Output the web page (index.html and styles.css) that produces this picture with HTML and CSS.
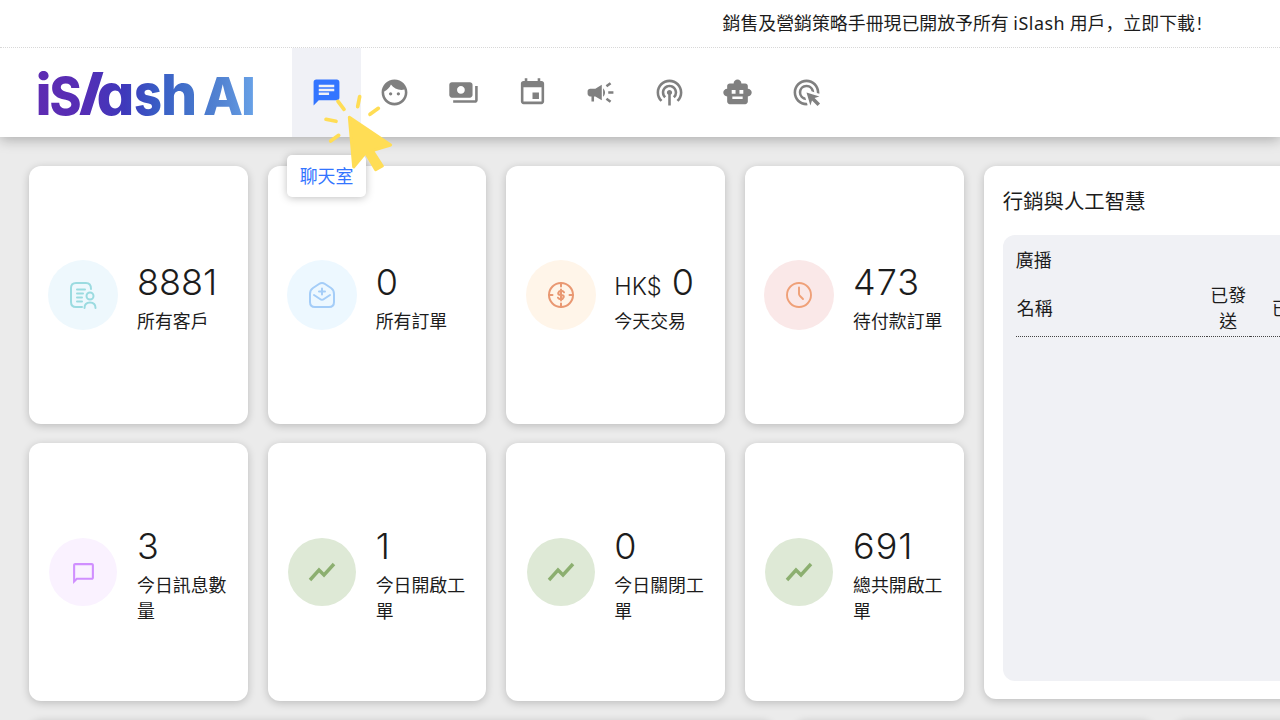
FILE: index.html
```
<!DOCTYPE html>
<html lang="zh-Hant">
<head>
<meta charset="utf-8">
<title>iSlash AI</title>
<link rel="stylesheet" href="styles.css">
</head>
<body>
<div class="banner"><p class="banner-text">銷售及營銷策略手冊現已開放予所有 <span class="latin">iSlash</span> 用戶<span class="punct" lang="zh-Hans">，</span>立即下載<span class="bang">!</span></p></div>
<header class="topbar">
  <svg class="logo" viewBox="0 0 230 60" role="img" aria-label="iSlash AI">
    <defs><linearGradient id="brand" gradientUnits="userSpaceOnUse" x1="8" y1="0" x2="226" y2="0">
      <stop offset="0" stop-color="#5e2cb2"/><stop offset=".2" stop-color="#562db5"/><stop offset=".4" stop-color="#3e39bb"/><stop offset=".55" stop-color="#395dc5"/><stop offset=".7" stop-color="#4473cb"/><stop offset=".85" stop-color="#5485d3"/><stop offset="1" stop-color="#69a3e8"/>
    </linearGradient></defs>
    <g class="logo-text" fill="url(#brand)">
      <text x="5.500" y="52">i</text>
      <text class="logo-cap" x="19.500" y="52" textLength="32" lengthAdjust="spacingAndGlyphs">S</text>
      <text class="logo-slash" x="50.500" y="45.500" textLength="22" lengthAdjust="spacingAndGlyphs">/</text>
      <text x="66.500" y="52" textLength="38" lengthAdjust="spacingAndGlyphs">a</text>
      <text x="104" y="52" textLength="28" lengthAdjust="spacingAndGlyphs">s</text>
      <text x="131" y="52">h</text>
      <text class="logo-cap" x="173" y="52">A</text>
      <text class="logo-cap" x="211" y="52">I</text>
    </g>
  </svg>
  <nav class="nav">
    <a class="nav-item active"><svg viewBox="0 0 24 24"><path d="M20 2H4c-1.1 0-1.99.9-1.99 2L2 22l4-4h14c1.1 0 2-.9 2-2V4c0-1.1-.9-2-2-2zM6 9h12v2H6V9zm8 5H6v-2h8v2zm4-6H6V6h12v2z"/></svg><span class="tooltip">聊天室</span>
      <svg class="cursor" viewBox="100 140 240 250"><g stroke="#ffdd55" stroke-linecap="round" stroke-linejoin="round"><path d="M160 168l18 24M225 154l-6 30M256 207l25-18M124 222l30 6M138 287l24-17" stroke-width="11" fill="none"/><path d="M194 216L318 299L263 316L293 362L273 373L243 322L207 365Z" fill="#ffdd55" stroke-width="9"/></g></svg>
    </a>
    <a class="nav-item"><svg viewBox="0 0 24 24"><path d="M9 11.75c-.69 0-1.25.56-1.25 1.25s.56 1.25 1.25 1.25 1.25-.56 1.25-1.25-.56-1.25-1.25-1.25zm6 0c-.69 0-1.25.56-1.25 1.25s.56 1.25 1.25 1.25 1.25-.56 1.25-1.25-.56-1.25-1.25-1.25zM12 2C6.48 2 2 6.48 2 12s4.48 10 10 10 10-4.48 10-10S17.52 2 12 2zm0 18c-4.41 0-8-3.59-8-8 0-.29.02-.58.05-.86 2.36-1.05 4.23-2.98 5.21-5.37C11.07 8.33 14.05 10 17.42 10c.78 0 1.53-.09 2.25-.26.21.71.33 1.47.33 2.26 0 4.41-3.59 8-8 8z"/></svg></a>
    <a class="nav-item"><svg viewBox="0 0 24 24"><path d="M19 14V6c0-1.1-.9-2-2-2H3c-1.1 0-2 .9-2 2v8c0 1.1.9 2 2 2h14c1.1 0 2-.9 2-2zm-9-1c-1.66 0-3-1.34-3-3s1.34-3 3-3 3 1.34 3 3-1.34 3-3 3zm13-6v11c0 1.1-.9 2-2 2H4v-2h17V7h2z"/></svg></a>
    <a class="nav-item"><svg viewBox="0 0 24 24"><path d="M17 12h-5v5h5v-5zM16 1v2H8V1H6v2H5c-1.11 0-1.99.9-1.99 2L3 19c0 1.1.89 2 2 2h14c1.1 0 2-.9 2-2V5c0-1.1-.9-2-2-2h-1V1h-2zm3 18H5V8h14v11z"/></svg></a>
    <a class="nav-item"><svg viewBox="0 0 24 24"><path d="M18 11v2h4v-2h-4zm-2 6.61c.96.71 2.21 1.65 3.2 2.39.4-.53.8-1.07 1.2-1.6-.99-.74-2.24-1.68-3.2-2.4-.4.54-.8 1.08-1.2 1.61zM20.4 5.6c-.4-.53-.8-1.07-1.2-1.6-.99.74-2.24 1.68-3.2 2.4.4.53.8 1.07 1.2 1.6.96-.72 2.21-1.65 3.2-2.4zM4 9c-1.1 0-2 .9-2 2v2c0 1.1.9 2 2 2h1v4h2v-4h1l5 3V6L8 9H4zm11.5 3c0-1.33-.58-2.53-1.5-3.35v6.69c.92-.81 1.5-2.01 1.5-3.34z"/></svg></a>
    <a class="nav-item"><svg viewBox="0 0 24 24"><path d="M14 12c0 .74-.4 1.38-1 1.72V22h-2v-8.28c-.6-.35-1-.98-1-1.72 0-1.1.9-2 2-2s2 .9 2 2zm-2-6c-3.31 0-6 2.69-6 6 0 1.74.75 3.31 1.94 4.4l1.42-1.42A3.957 3.957 0 0 1 8 12c0-2.21 1.79-4 4-4s4 1.79 4 4c0 1.19-.53 2.25-1.36 2.98l1.42 1.42A5.957 5.957 0 0 0 18 12c0-3.31-2.69-6-6-6zm0-4C6.48 2 2 6.48 2 12c0 2.85 1.2 5.41 3.11 7.24l1.42-1.42A7.987 7.987 0 0 1 4 12c0-4.41 3.59-8 8-8s8 3.59 8 8c0 2.29-.98 4.36-2.53 5.82l1.42 1.42C20.8 17.41 22 14.85 22 12c0-5.52-4.48-10-10-10z"/></svg></a>
    <a class="nav-item"><svg viewBox="0 0 24 24"><path fill-rule="evenodd" d="M20 9V7c0-1.1-.9-2-2-2h-3c0-1.66-1.34-3-3-3S9 3.34 9 5H6c-1.1 0-2 .9-2 2v2c-1.66 0-3 1.34-3 3s1.34 3 3 3v4c0 1.1.9 2 2 2h12c1.1 0 2-.9 2-2v-4c1.66 0 3-1.34 3-3s-1.34-3-3-3zM7.500 10h3v3h-3zM13.500 10h3v3h-3zM8 15h8v2H8z"/></svg></a>
    <a class="nav-item"><svg viewBox="0 0 24 24"><path d="M11.71 17.99A5.993 5.993 0 0 1 6 12c0-3.31 2.69-6 6-6 3.22 0 5.84 2.53 5.99 5.71l-2.1-.63a3.999 3.999 0 1 0-4.81 4.81l.63 2.1zM22 12c0 .3-.01.6-.04.9l-1.97-.59c.01-.1.01-.21.01-.31 0-4.42-3.58-8-8-8s-8 3.58-8 8 3.58 8 8 8c.1 0 .21 0 .31-.01l.59 1.97c-.3.03-.6.04-.9.04-5.52 0-10-4.48-10-10S6.48 2 12 2s10 4.48 10 10zm-3.77 4.26L22 15l-10-3 3 10 1.26-3.77 4.27 4.27 1.98-1.98-4.28-4.26z"/></svg></a>
  </nav>
</header>
<main class="content">
  <div class="overview">
    <section class="stats">
      <article class="card stat"><div class="badge teal"><svg viewBox="0 0 28 28"><path d="M13 26H7Q2 26 2 21V7Q2 2 7 2H17Q22 2 22 8M8 8.500h8M8 12.500h6M8 16.500h5M8 20.500h5"/><circle cx="21" cy="15" r="3.500"/><path d="M15.500 27Q15.500 21.500 21 21.500T26.500 27"/></svg></div><div class="info"><div class="value">8881</div><div class="label">所有客戶</div></div></article>
      <article class="card stat"><div class="badge blue"><svg viewBox="0 0 28 28"><path d="M2 13Q2 9 5 7L11 3Q14 1 17 3L23 7Q26 9 26 13V21Q26 26 21 26H7Q2 26 2 21Z"/><path d="M6 14L12 18Q14 19.500 16 18L22 14M14 7.500v6M11 10.500h6"/></svg></div><div class="info"><div class="value">0</div><div class="label">所有訂單</div></div></article>
      <article class="card stat"><div class="badge orange"><svg viewBox="0 0 28 28"><circle cx="14" cy="14" r="12"/><path d="M14 2v3.500M14 22.500v3.500M2 14h3.500M22.500 14h3.500M17 11.300Q16 9.800 14 9.800T11.300 11.800T14 14T16.700 16.200T14 18.200T11 16.700M14 8.500v11"/></svg></div><div class="info"><div class="value"><small>HK$</small> 0</div><div class="label">今天交易</div></div></article>
      <article class="card stat"><div class="badge red"><svg viewBox="0 0 28 28"><circle cx="14" cy="14" r="12"/><path d="M14 6.500V13Q14 14 15 15L18 18"/></svg></div><div class="info"><div class="value wide">473</div><div class="label">待付款訂單</div></div></article>
      <article class="card stat"><div class="badge purple"><svg viewBox="0 0 24 24"><path d="M20 2H4c-1.100 0-2 .9-2 2v18l4-4h14c1.100 0 2-.9 2-2V4c0-1.100-.9-2-2-2zm0 14H5.200L4 17.200V4h16v12z"/></svg></div><div class="info"><div class="value">3</div><div class="label">今日訊息數量</div></div></article>
      <article class="card stat"><div class="badge green"><svg viewBox="0 0 28 20"><path d="M2 18L11 8L16 13L26 2"/></svg></div><div class="info"><div class="value">1</div><div class="label">今日開啟工單</div></div></article>
      <article class="card stat"><div class="badge green"><svg viewBox="0 0 28 20"><path d="M2 18L11 8L16 13L26 2"/></svg></div><div class="info"><div class="value">0</div><div class="label">今日關閉工單</div></div></article>
      <article class="card stat"><div class="badge green"><svg viewBox="0 0 28 20"><path d="M2 18L11 8L16 13L26 2"/></svg></div><div class="info"><div class="value wide">691</div><div class="label">總共開啟工單</div></div></article>
    </section>
    <section class="card panel">
      <h2 class="panel-title">行銷與人工智慧</h2>
      <div class="broadcast">
        <h3 class="broadcast-title">廣播</h3>
        <div class="table-head"><div class="cell name">名稱</div><div class="cell">已發送</div><div class="cell">已</div></div>
      </div>
    </section>
  </div>
  <div class="lower"><div class="card"></div><div class="card"></div><div class="card"></div></div>
</main>
</body>
</html>
```
FILE: styles.css
```
* { box-sizing: border-box; }
body {
  margin: 0;
  width: 1280px;
  height: 720px;
  overflow: hidden;
  background: #ebebeb;
  color: #1c1c1c;
  font: 17.9px/26px Lato, "Noto Sans CJK TC", sans-serif;
}
.banner {
  position: relative;
  z-index: 3;
  height: 48px;
  padding: 9px 0 0 722.500px;
  background: #fff;
  border-bottom: 1px dotted #d8d8d8;
}
.banner-text { margin: 0; white-space: nowrap; }
.latin { font-family: "Noto Sans", sans-serif; letter-spacing: .5px; }
.bang { margin-left: 2px; }
.punct { font-family: "Noto Sans CJK SC", sans-serif; }
.topbar {
  position: relative;
  z-index: 2;
  display: flex;
  height: 89px;
  background: #fff;
  box-shadow: 0 3px 12px rgba(0, 0, 0, .26);
}
.logo { width: 230px; height: 60px; margin: 15px 32px 0 30px; flex: none; overflow: visible; }
.logo-text { font: 800 57px Inter, sans-serif; font-feature-settings: "cv11"; }
.logo-cap { font-size: 52px; }
.logo-slash { font-size: 47px; stroke: url(#brand); stroke-width: 2px; }
.nav { display: flex; }
.nav-item {
  position: relative;
  display: flex;
  align-items: center;
  justify-content: center;
  width: 68.6px;
}
.nav-item > svg { width: 31px; height: 31px; fill: #808080; }
.nav-item.active { background: #f0f1f6; }
.nav-item.active > svg { fill: #3375ff; }
.tooltip {
  position: absolute;
  top: 107px;
  left: -5px;
  width: 79px;
  height: 42px;
  border-radius: 5px;
  background: #fff;
  box-shadow: 0 1px 8px rgba(0, 0, 0, .25);
  color: #3375ff;
  line-height: 42px;
  text-align: center;
}
.nav-item > .cursor { position: absolute; left: 26px; top: 43.700px; width: 80px; height: 83.300px; }
.content { padding: 29.400px 0 0 29px; }
.overview { display: flex; gap: 20px; }
.stats {
  display: grid;
  grid-template-columns: repeat(4, 218.700px);
  grid-template-rows: 257.500px 257.500px;
  gap: 19.500px 20px;
  flex: none;
}
.card { background: #fff; border-radius: 12px; box-shadow: 0 2px 8px rgba(0, 0, 0, .2); }
.stat { display: flex; align-items: center; gap: 18.600px; padding: 0 18px 0 19.400px; }
.badge {
  flex: none;
  display: flex;
  align-items: center;
  justify-content: center;
  width: 70px;
  height: 70px;
  border-radius: 50%;
}
.badge svg { width: 28px; height: 28px; fill: none; stroke-width: 2; stroke-linecap: round; stroke-linejoin: round; }
.teal { background: #eef8fd; }
.teal svg { stroke: #9bdbe0; }
.blue { background: #edf8ff; }
.blue svg { stroke: #a4cdf8; }
.orange { background: #fff5e9; }
.orange svg { stroke: #e99872; }
.red { background: #fae8e8; }
.red svg { stroke: #efa078; stroke-width: 1.900; }
.purple { background: #faf2ff; background-clip: content-box; padding: 1px; }
.purple svg { width: 25px; height: 25px; margin-top: 3px; fill: #d08fff; }
.green { background: #dee9d6; background-clip: content-box; padding: 1px; }
.green svg { height: 20px; stroke: #8caf70; stroke-width: 3.400; stroke-linecap: butt; stroke-linejoin: miter; }
.value {
  height: 52px;
  font: 350 36px/52px Inter, sans-serif;
  white-space: nowrap;
}
.value.wide { letter-spacing: 1px; }
.value small { font-size: 23.500px; }
.panel { flex: none; width: 420px; height: 533px; padding: 22px 19px 19px; }
.panel-title { margin: 0 0 21px; font-size: 20.400px; line-height: 26px; font-weight: 400; }
.broadcast { height: 445.500px; border-radius: 12px; background: #f0f1f5; padding: 12px 13px; }
.broadcast-title { margin: 0 0 8px; font-size: 17.900px; line-height: 26px; font-weight: 400; }
.table-head { display: grid; grid-template-columns: 191px 43px 90px; }
.cell {
  display: flex;
  align-items: center;
  justify-content: center;
  height: 56px;
  padding: 0 3px 2px;
  border-bottom: 1px dotted #444;
  text-align: center;
}
.cell.name { justify-content: flex-start; padding-left: 1px; }
.cell:last-child { justify-content: flex-start; padding-left: 22px; }
.lower { display: grid; grid-template-columns: 745px 360px 300px; gap: 20px; padding-top: 19.500px; }
.lower .card { height: 200px; }
```
